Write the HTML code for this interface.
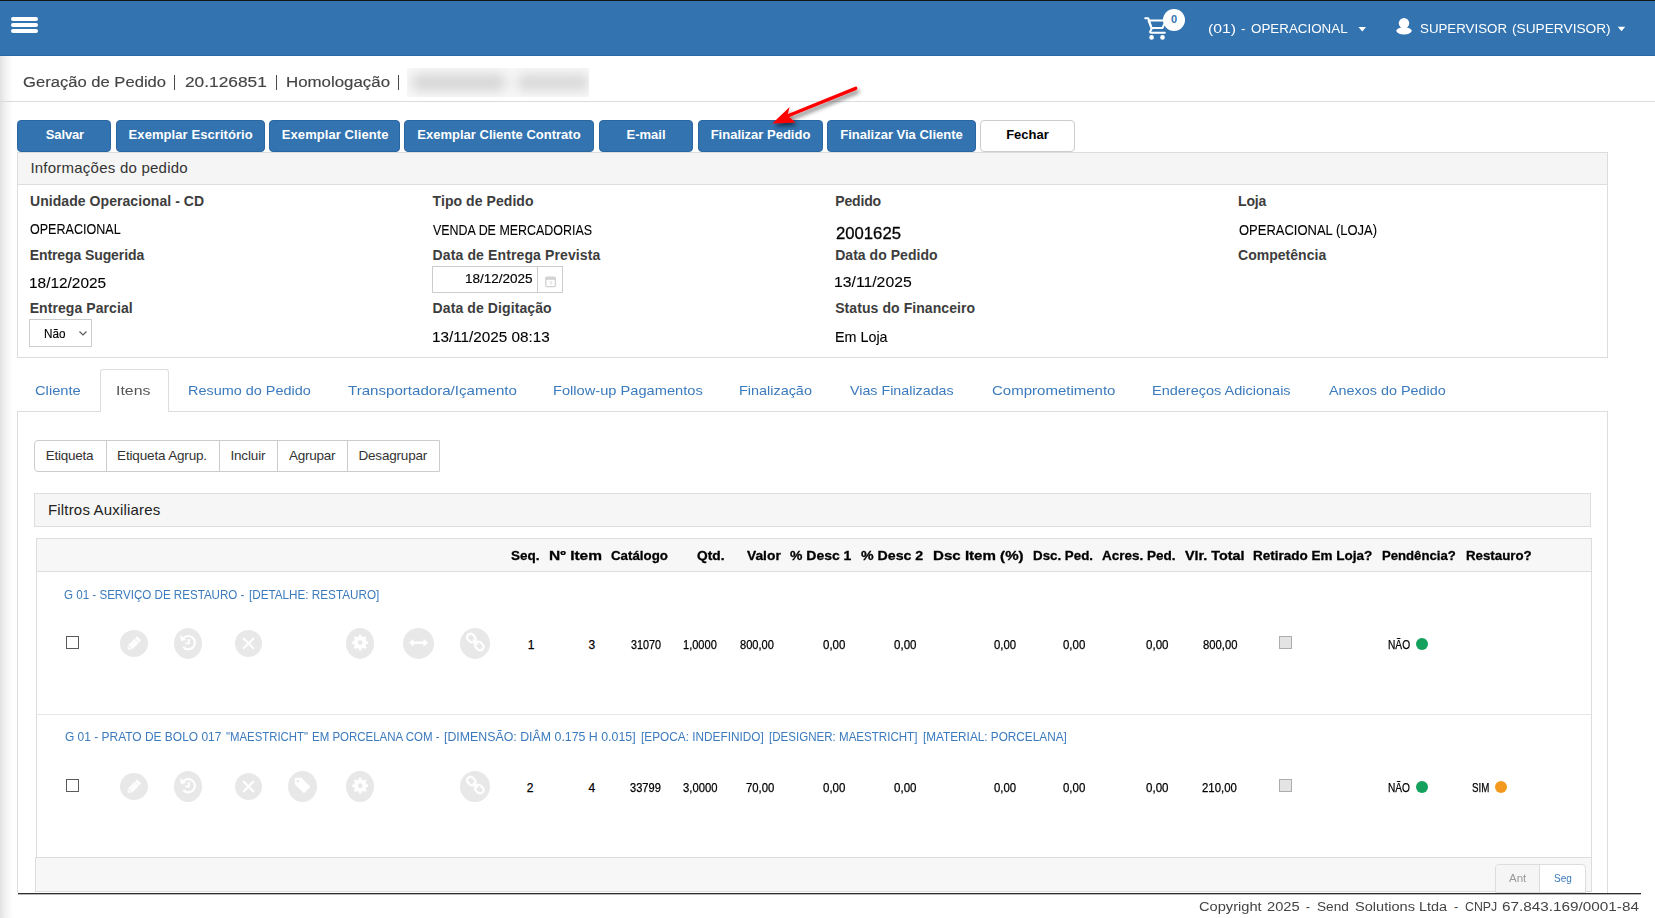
<!DOCTYPE html>
<html><head><meta charset="utf-8"><title>Geração de Pedido</title>
<style>
html,body{margin:0;padding:0;}
body{width:1655px;height:918px;overflow:hidden;position:relative;background:#fff;font-family:"Liberation Sans",sans-serif;}
.a{position:absolute;box-sizing:border-box;}
.t{position:absolute;white-space:nowrap;}
.btn{position:absolute;box-sizing:border-box;top:120px;height:32px;background:#3273b0;border:1px solid #2a66a0;border-radius:4px;}
.circ{position:absolute;background:#e8e8e8;border-radius:50%;}
.circ svg{position:absolute;left:0;top:0;}
</style></head><body>
<!-- left shadow -->
<div class="a" style="left:0;top:56px;width:13px;height:862px;background:linear-gradient(to right,#e2e2e2,#f3f3f3 45%,#fff)"></div>
<!-- navbar -->
<div class="a" style="left:0;top:0;width:1655px;height:56px;background:#3273b0;border-top:1px solid #151515;border-bottom:1px solid #2c69a6"></div>
<div class="a" style="left:11px;top:17px;width:27px;height:4px;background:#fff;border-radius:2px"></div>
<div class="a" style="left:11px;top:23px;width:27px;height:4px;background:#fff;border-radius:2px"></div>
<div class="a" style="left:11px;top:29px;width:27px;height:4px;background:#fff;border-radius:2px"></div>
<svg class="a" style="left:1140px;top:12px" width="30" height="30" viewBox="1140 12 30 30">
 <path d="M1145.2 18.2 H1148.2 L1151.8 28.6 L1150.2 31.4 Q1149.6 32.8 1151.2 32.8 H1164.8" fill="none" stroke="#fff" stroke-width="2" stroke-linejoin="round" stroke-linecap="round"/>
 <path d="M1148.6 20.6 H1166 L1162.4 28 H1151.4 Z" fill="none" stroke="#fff" stroke-width="2" stroke-linejoin="round"/>
 <circle cx="1151.6" cy="37.4" r="2.3" fill="#fff"/>
 <circle cx="1162.5" cy="37.4" r="2.3" fill="#fff"/>
</svg>
<div class="a" style="left:1163px;top:9px;width:22px;height:22px;border-radius:50%;background:#fff"></div>
<svg class="a" style="left:1358px;top:26px" width="9" height="7"><path d="M0.5 1 H8 L4.25 5.5 Z" fill="#fff"/></svg>
<svg class="a" style="left:1617px;top:26px" width="9" height="7"><path d="M0.8 0.8 H8.2 L4.5 5.2 Z" fill="#fff"/></svg>
<svg class="a" style="left:1395px;top:17px" width="18" height="19" viewBox="0 0 18 19">
 <circle cx="9" cy="6.2" r="5.2" fill="#fff"/>
 <path d="M1.1 13.6 Q3.2 10.6 7 10.6 H11 Q14.8 10.6 16.9 13.6 Q15.6 17.6 9 17.6 Q2.4 17.6 1.1 13.6 Z" fill="#fff"/>
</svg>
<!-- title -->
<div class="a" style="left:407px;top:68px;width:182px;height:29px;background:#f8f8f8;overflow:hidden">
  <div class="a" style="left:5px;top:6px;width:94px;height:17px;background:#d6d6d6;filter:blur(6px);border-radius:6px"></div>
  <div class="a" style="left:110px;top:6px;width:72px;height:17px;background:#d9d9d9;filter:blur(6px);border-radius:6px"></div>
</div>
<div class="a" style="left:0;top:101px;width:1655px;height:1px;background:#dcdcdc"></div>
<div class="a" style="left:174.1px;top:75px;width:1.1px;height:15px;background:#4a4a4a"></div>
<div class="a" style="left:276px;top:75px;width:1.1px;height:15px;background:#4a4a4a"></div>
<div class="a" style="left:398.3px;top:75px;width:1.1px;height:15px;background:#4a4a4a"></div>
<!-- buttons -->
<div class="btn" style="left:17px;width:94px"></div>
<div class="btn" style="left:116px;width:149px"></div>
<div class="btn" style="left:269px;width:131px"></div>
<div class="btn" style="left:404px;width:190px"></div>
<div class="btn" style="left:599px;width:94px"></div>
<div class="btn" style="left:698px;width:125px"></div>
<div class="btn" style="left:827px;width:149px"></div>
<div class="btn" style="left:980px;width:95px;background:#fff;border-color:#ccc"></div>
<!-- info panel -->
<div class="a" style="left:17px;top:152px;width:1591px;height:206px;border:1px solid #dddddd"></div>
<div class="a" style="left:18px;top:153px;width:1589px;height:32px;background:#f5f5f5;border-bottom:1px solid #dddddd"></div>
<!-- date input -->
<div class="a" style="left:432px;top:266px;width:131px;height:27px;border:1px solid #cccccc"></div>
<div class="a" style="left:537px;top:266px;width:1px;height:27px;background:#cccccc"></div>
<svg class="a" style="left:544px;top:275px" width="13" height="13" viewBox="0 0 13 13">
 <rect x="1.8" y="2.2" width="9.6" height="9.4" rx="1.2" fill="none" stroke="#d2d2d2" stroke-width="1.3"/>
 <rect x="1.8" y="2.2" width="9.6" height="2.6" fill="#d2d2d2"/>
 <path d="M5.2 7 H8 L6.6 10" fill="none" stroke="#dedede" stroke-width="1"/>
</svg>
<!-- select -->
<div class="a" style="left:29px;top:319px;width:63px;height:28px;border:1px solid #cccccc;background:#fff"></div>
<svg class="a" style="left:78px;top:329px" width="10" height="8"><path d="M1.5 2.5 L5 6 L8.5 2.5" fill="none" stroke="#555" stroke-width="1.1"/></svg>
<!-- tabs -->
<div class="a" style="left:17px;top:411px;width:1591px;height:1px;background:#dddddd"></div>
<div class="a" style="left:100px;top:369px;width:69px;height:43px;border:1px solid #dddddd;border-bottom:none;background:#fff;border-radius:3px 3px 0 0"></div>
<div class="a" style="left:17px;top:411px;width:1px;height:482px;background:#dddddd"></div>
<div class="a" style="left:1607px;top:411px;width:1px;height:482px;background:#dddddd"></div>
<!-- button group -->
<div class="a" style="left:34px;top:440px;width:406px;height:32px;border:1px solid #cccccc;border-radius:4px 0 0 4px"></div>
<div class="a" style="left:106px;top:440px;width:1px;height:32px;background:#cccccc"></div>
<div class="a" style="left:219px;top:440px;width:1px;height:32px;background:#cccccc"></div>
<div class="a" style="left:277px;top:440px;width:1px;height:32px;background:#cccccc"></div>
<div class="a" style="left:347px;top:440px;width:1px;height:32px;background:#cccccc"></div>
<!-- filtros -->
<div class="a" style="left:34px;top:493px;width:1557px;height:34px;background:#f6f6f6;border:1px solid #dddddd"></div>
<!-- table -->
<div class="a" style="left:36px;top:538px;width:1556px;height:320px;border:1px solid #dddddd;border-bottom:none"></div>
<div class="a" style="left:37px;top:539px;width:1554px;height:33px;background:#f7f7f7;border-bottom:1px solid #dddddd"></div>
<div class="a" style="left:37px;top:714px;width:1554px;height:1px;background:#e6e6e6"></div>
<!-- row checkboxes -->
<div class="a" style="left:66px;top:636px;width:13px;height:13px;border:1px solid #5a5a5a;background:#fff"></div>
<div class="a" style="left:66px;top:779px;width:13px;height:13px;border:1px solid #5a5a5a;background:#fff"></div>
<div class="a" style="left:1279px;top:636px;width:13px;height:13px;border:1px solid #adadad;background:#e4e4e4"></div>
<div class="a" style="left:1279px;top:779px;width:13px;height:13px;border:1px solid #adadad;background:#e4e4e4"></div>
<!-- dots -->
<div class="a" style="left:1415.5px;top:638px;width:12px;height:12px;border-radius:50%;background:#13a15d"></div>
<div class="a" style="left:1415.5px;top:781.3px;width:12px;height:12px;border-radius:50%;background:#13a15d"></div>
<div class="a" style="left:1494.5px;top:781.3px;width:12px;height:12px;border-radius:50%;background:#f39a1e"></div>
<svg class="a" style="left:0;top:0" width="1655" height="918" viewBox="0 0 1655 918">
<ellipse cx="134" cy="643.4" rx="14.0" ry="13.5" fill="#e8e8e8"/>
<g transform="translate(134,643.4) rotate(-45)"><rect x="-5.6" y="-2.9" width="9.4" height="5.8" fill="#fff"/><rect x="4.5" y="-2.9" width="2.6" height="5.8" rx="0.6" fill="#fff"/><path d="M-6.4 -2.9 L-8.6 0 L-6.4 2.9 Z" fill="#fff"/><line x1="-6" y1="-1.0" x2="3.2" y2="-1.0" stroke="#e8e8e8" stroke-width="0.5"/></g>
<ellipse cx="188" cy="643.4" rx="14.0" ry="15.5" fill="#e8e8e8"/>
<g transform="translate(188.4,642.6)" fill="none" stroke="#fff" stroke-width="2.1"><path d="M-5.8 -3.2 A6.6 6.6 0 1 1 -5.2 4.2"/><path d="M0.4 -3.6 V0.8 H-3" stroke-width="1.9"/></g><path d="M180.20000000000002 635.0 L180.8 641.0 L186.20000000000002 640.0 Z" fill="#fff"/>
<ellipse cx="248.5" cy="643.4" rx="13.5" ry="13.5" fill="#e8e8e8"/>
<g stroke="#fff" stroke-width="2.1" stroke-linecap="butt"><line x1="243.1" y1="638.0" x2="253.9" y2="648.8"/><line x1="253.9" y1="638.0" x2="243.1" y2="648.8"/></g>
<ellipse cx="360" cy="643.4" rx="14.0" ry="15.5" fill="#e8e8e8"/>
<path d="M366.06 641.29 L368.08 641.25 L368.08 643.95 L366.06 643.91 L365.27 645.81 L366.73 647.22 L364.82 649.13 L363.41 647.67 L361.51 648.46 L361.55 650.48 L358.85 650.48 L358.89 648.46 L356.99 647.67 L355.58 649.13 L353.67 647.22 L355.13 645.81 L354.34 643.91 L352.32 643.95 L352.32 641.25 L354.34 641.29 L355.13 639.39 L353.67 637.98 L355.58 636.07 L356.99 637.53 L358.89 636.74 L358.85 634.72 L361.55 634.72 L361.51 636.74 L363.41 637.53 L364.82 636.07 L366.73 637.98 L365.27 639.39 Z" fill="#fff"/><circle cx="360.2" cy="642.6" r="6.2" fill="#fff"/><circle cx="360.2" cy="642.6" r="2.4" fill="#e8e8e8"/>
<ellipse cx="418.5" cy="643.4" rx="15.5" ry="15.5" fill="#e8e8e8"/>
<rect x="412.5" y="641.4" width="12" height="2.6" fill="#fff"/><path d="M409.0 642.6999999999999 L413.5 638.6999999999999 L413.5 646.6999999999999 Z" fill="#fff"/><path d="M428.0 642.6999999999999 L423.5 638.6999999999999 L423.5 646.6999999999999 Z" fill="#fff"/>
<ellipse cx="475" cy="643.4" rx="15.0" ry="15.5" fill="#e8e8e8"/>
<g transform="translate(475.3,642.0) rotate(-45)" fill="none" stroke="#fff" stroke-width="2.2"><rect x="-3.4" y="-10.2" width="6.8" height="9.2" rx="3.2"/><rect x="-3.4" y="1.0" width="6.8" height="9.2" rx="3.2"/><line x1="0" y1="-3.6" x2="0" y2="3.6" stroke-width="1.6"/></g>
<ellipse cx="134" cy="786.5" rx="14.0" ry="13.5" fill="#e8e8e8"/>
<g transform="translate(134,786.5) rotate(-45)"><rect x="-5.6" y="-2.9" width="9.4" height="5.8" fill="#fff"/><rect x="4.5" y="-2.9" width="2.6" height="5.8" rx="0.6" fill="#fff"/><path d="M-6.4 -2.9 L-8.6 0 L-6.4 2.9 Z" fill="#fff"/><line x1="-6" y1="-1.0" x2="3.2" y2="-1.0" stroke="#e8e8e8" stroke-width="0.5"/></g>
<ellipse cx="188" cy="786.5" rx="14.0" ry="15.5" fill="#e8e8e8"/>
<g transform="translate(188.4,785.7)" fill="none" stroke="#fff" stroke-width="2.1"><path d="M-5.8 -3.2 A6.6 6.6 0 1 1 -5.2 4.2"/><path d="M0.4 -3.6 V0.8 H-3" stroke-width="1.9"/></g><path d="M180.20000000000002 778.1 L180.8 784.1 L186.20000000000002 783.1 Z" fill="#fff"/>
<ellipse cx="248.5" cy="786.5" rx="13.5" ry="13.5" fill="#e8e8e8"/>
<g stroke="#fff" stroke-width="2.1" stroke-linecap="butt"><line x1="243.1" y1="781.1" x2="253.9" y2="791.9"/><line x1="253.9" y1="781.1" x2="243.1" y2="791.9"/></g>
<ellipse cx="302.5" cy="786.5" rx="14.5" ry="15.5" fill="#e8e8e8"/>
<path d="M294.8 778.7 Q294.8 777.7 295.8 777.7 L301.40000000000003 777.7 L310.40000000000003 786.7 L304.0 793.3000000000001 L294.8 784.3000000000001 Z" fill="#fff"/><circle cx="297.8" cy="781.1" r="1.3" fill="#e8e8e8"/>
<ellipse cx="360" cy="786.5" rx="14.0" ry="15.5" fill="#e8e8e8"/>
<path d="M366.06 784.39 L368.08 784.35 L368.08 787.05 L366.06 787.01 L365.27 788.91 L366.73 790.32 L364.82 792.23 L363.41 790.77 L361.51 791.56 L361.55 793.58 L358.85 793.58 L358.89 791.56 L356.99 790.77 L355.58 792.23 L353.67 790.32 L355.13 788.91 L354.34 787.01 L352.32 787.05 L352.32 784.35 L354.34 784.39 L355.13 782.49 L353.67 781.08 L355.58 779.17 L356.99 780.63 L358.89 779.84 L358.85 777.82 L361.55 777.82 L361.51 779.84 L363.41 780.63 L364.82 779.17 L366.73 781.08 L365.27 782.49 Z" fill="#fff"/><circle cx="360.2" cy="785.7" r="6.2" fill="#fff"/><circle cx="360.2" cy="785.7" r="2.4" fill="#e8e8e8"/>
<ellipse cx="475" cy="786.5" rx="15.0" ry="15.5" fill="#e8e8e8"/>
<g transform="translate(475.3,785.1) rotate(-45)" fill="none" stroke="#fff" stroke-width="2.2"><rect x="-3.4" y="-10.2" width="6.8" height="9.2" rx="3.2"/><rect x="-3.4" y="1.0" width="6.8" height="9.2" rx="3.2"/><line x1="0" y1="-3.6" x2="0" y2="3.6" stroke-width="1.6"/></g>
</svg>
<!-- pager -->
<div class="a" style="left:35px;top:857px;width:1557px;height:35px;background:#f7f7f7;border:1px solid #dddddd"></div>
<div class="a" style="left:1495px;top:864px;width:91px;height:29px;border:1px solid #dddddd;border-radius:4px 4px 0 0;background:#fff;overflow:hidden">
  <div class="a" style="left:0;top:0;width:44px;height:29px;background:#f5f5f5;border-right:1px solid #dddddd"></div>
</div>
<!-- footer -->
<div class="a" style="left:18px;top:893px;width:1623px;height:1px;background:#2e2e2e"></div>
<div class="a" style="left:18px;top:894px;width:1623px;height:1px;background:#b8b8b8"></div>
<!-- red arrow -->
<svg class="a" style="left:740px;top:70px" width="140" height="80" viewBox="740 70 140 80">
 <defs><filter id="sh" x="-30%" y="-30%" width="160%" height="160%"><feGaussianBlur in="SourceAlpha" stdDeviation="2"/><feOffset dx="2" dy="3" result="b"/><feComponentTransfer><feFuncA type="linear" slope="0.55"/></feComponentTransfer><feMerge><feMergeNode/><feMergeNode in="SourceGraphic"/></feMerge></filter></defs>
 <g filter="url(#sh)">
  <line x1="855.7" y1="88.3" x2="785" y2="117" stroke="#ff0000" stroke-width="3.4" stroke-linecap="round"/>
  <path d="M772.3 123.5 L789.6 106.9 L787.5 115.5 L795.5 122.5 Z" fill="#ff0000"/>
 </g>
</svg>
<div class=t style="left:1207.50px;top:22.80px;font:400 12.5px/12.5px 'Liberation Sans',sans-serif;color:#fff;transform:scaleX(1.2598);transform-origin:0 0">(01)</div>
<div class=t style="left:1241.10px;top:22.80px;font:400 12.5px/12.5px 'Liberation Sans',sans-serif;color:#fff;letter-spacing:0.000px">-</div>
<div class=t style="left:1251.30px;top:22.80px;font:400 12.5px/12.5px 'Liberation Sans',sans-serif;color:#fff;transform:scaleX(1.0703);transform-origin:0 0">OPERACIONAL</div>
<div class=t style="left:1420.40px;top:22.90px;font:400 12.5px/12.5px 'Liberation Sans',sans-serif;color:#fff;transform:scaleX(1.0647);transform-origin:0 0">SUPERVISOR</div>
<div class=t style="left:1512.30px;top:22.90px;font:400 12.5px/12.5px 'Liberation Sans',sans-serif;color:#fff;transform:scaleX(1.0957);transform-origin:0 0">(SUPERVISOR)</div>
<div class=t style="left:1171.00px;top:14.00px;font:700 11px/11px 'Liberation Sans',sans-serif;color:#3273b0;letter-spacing:0.000px">0</div>
<div class=t style="left:22.90px;top:73.90px;font:400 15.5px/15.5px 'Liberation Sans',sans-serif;color:#444;transform:scaleX(1.0711);transform-origin:0 0;-webkit-text-stroke:0.15px #444">Geração de Pedido</div>
<div class=t style="left:184.60px;top:73.90px;font:400 15.5px/15.5px 'Liberation Sans',sans-serif;color:#444;transform:scaleX(1.1163);transform-origin:0 0;-webkit-text-stroke:0.15px #444">20.126851</div>
<div class=t style="left:285.51px;top:73.90px;font:400 15.5px/15.5px 'Liberation Sans',sans-serif;color:#444;transform:scaleX(1.0881);transform-origin:0 0;-webkit-text-stroke:0.15px #444">Homologação</div>
<div class=t style="left:45.80px;top:128.20px;font:700 13px/13px 'Liberation Sans',sans-serif;color:#fff;letter-spacing:-0.135px">Salvar</div>
<div class=t style="left:128.60px;top:128.20px;font:700 13px/13px 'Liberation Sans',sans-serif;color:#fff;letter-spacing:0.073px">Exemplar Escritório</div>
<div class=t style="left:281.80px;top:128.20px;font:700 13px/13px 'Liberation Sans',sans-serif;color:#fff;letter-spacing:0.076px">Exemplar Cliente</div>
<div class=t style="left:417.37px;top:128.20px;font:700 13px/13px 'Liberation Sans',sans-serif;color:#fff;letter-spacing:0.000px">Exemplar Cliente Contrato</div>
<div class=t style="left:626.49px;top:128.20px;font:700 13px/13px 'Liberation Sans',sans-serif;color:#fff;letter-spacing:0.000px">E-mail</div>
<div class=t style="left:710.66px;top:128.20px;font:700 13px/13px 'Liberation Sans',sans-serif;color:#fff;letter-spacing:0.000px">Finalizar Pedido</div>
<div class=t style="left:840.21px;top:128.20px;font:700 13px/13px 'Liberation Sans',sans-serif;color:#fff;letter-spacing:0.000px">Finalizar Via Cliente</div>
<div class=t style="left:1006.18px;top:128.20px;font:700 13px/13px 'Liberation Sans',sans-serif;color:#000;letter-spacing:0.000px">Fechar</div>
<div class=t style="left:30.40px;top:159.90px;font:400 15px/15px 'Liberation Sans',sans-serif;color:#333;letter-spacing:0.232px">Informações do pedido</div>
<div class=t style="left:30.00px;top:193.50px;font:700 14px/14px 'Liberation Sans',sans-serif;color:#3d3d3d;letter-spacing:0.061px">Unidade Operacional - CD</div>
<div class=t style="left:432.60px;top:193.50px;font:700 14px/14px 'Liberation Sans',sans-serif;color:#3d3d3d;letter-spacing:0.067px">Tipo de Pedido</div>
<div class=t style="left:835.20px;top:193.60px;font:700 14px/14px 'Liberation Sans',sans-serif;color:#3d3d3d;letter-spacing:-0.143px">Pedido</div>
<div class=t style="left:1238.00px;top:193.60px;font:700 14px/14px 'Liberation Sans',sans-serif;color:#3d3d3d;letter-spacing:-0.131px">Loja</div>
<div class=t style="left:29.70px;top:247.80px;font:700 14px/14px 'Liberation Sans',sans-serif;color:#3d3d3d;letter-spacing:-0.095px">Entrega Sugerida</div>
<div class=t style="left:432.60px;top:248.00px;font:700 14px/14px 'Liberation Sans',sans-serif;color:#3d3d3d;letter-spacing:0.119px">Data de Entrega Prevista</div>
<div class=t style="left:835.20px;top:248.00px;font:700 14px/14px 'Liberation Sans',sans-serif;color:#3d3d3d;letter-spacing:0.035px">Data do Pedido</div>
<div class=t style="left:1238.00px;top:247.80px;font:700 14px/14px 'Liberation Sans',sans-serif;color:#3d3d3d;letter-spacing:0.028px">Competência</div>
<div class=t style="left:29.70px;top:300.80px;font:700 14px/14px 'Liberation Sans',sans-serif;color:#3d3d3d;letter-spacing:0.075px">Entrega Parcial</div>
<div class=t style="left:432.60px;top:300.80px;font:700 14px/14px 'Liberation Sans',sans-serif;color:#3d3d3d;letter-spacing:0.099px">Data de Digitação</div>
<div class=t style="left:835.20px;top:300.80px;font:700 14px/14px 'Liberation Sans',sans-serif;color:#3d3d3d;letter-spacing:0.078px">Status do Financeiro</div>
<div class=t style="left:30.20px;top:222.30px;font:400 14px/14px 'Liberation Sans',sans-serif;color:#000;transform:scaleX(0.8959);transform-origin:0 0;-webkit-text-stroke:0.10px #000">OPERACIONAL</div>
<div class=t style="left:432.80px;top:222.60px;font:400 14px/14px 'Liberation Sans',sans-serif;color:#000;transform:scaleX(0.8887);transform-origin:0 0;-webkit-text-stroke:0.10px #000">VENDA DE MERCADORIAS</div>
<div class=t style="left:835.50px;top:224.70px;font:400 17px/17px 'Liberation Sans',sans-serif;color:#000;transform:scaleX(0.9813);transform-origin:0 0;-webkit-text-stroke:0.30px #000">2001625</div>
<div class=t style="left:1238.60px;top:222.80px;font:400 14px/14px 'Liberation Sans',sans-serif;color:#000;transform:scaleX(0.9274);transform-origin:0 0;-webkit-text-stroke:0.10px #000">OPERACIONAL (LOJA)</div>
<div class=t style="left:29.44px;top:275.70px;font:400 14.5px/14.5px 'Liberation Sans',sans-serif;color:#000;transform:scaleX(1.0628);transform-origin:0 0;-webkit-text-stroke:0.10px #000">18/12/2025</div>
<div class=t style="left:834.41px;top:275.40px;font:400 14.5px/14.5px 'Liberation Sans',sans-serif;color:#000;transform:scaleX(1.0862);transform-origin:0 0;-webkit-text-stroke:0.10px #000">13/11/2025</div>
<div class=t style="left:431.95px;top:329.50px;font:400 14.5px/14.5px 'Liberation Sans',sans-serif;color:#000;transform:scaleX(1.0529);transform-origin:0 0;-webkit-text-stroke:0.10px #000">13/11/2025 08:13</div>
<div class=t style="left:834.51px;top:329.50px;font:400 14.5px/14.5px 'Liberation Sans',sans-serif;color:#000;transform:scaleX(0.9882);transform-origin:0 0;-webkit-text-stroke:0.10px #000">Em Loja</div>
<div class=t style="left:465.00px;top:273.10px;font:400 12px/12px 'Liberation Sans',sans-serif;color:#000;transform:scaleX(1.1261);transform-origin:0 0;-webkit-text-stroke:0.15px #000">18/12/2025</div>
<div class=t style="left:43.60px;top:327.60px;font:400 12px/12px 'Liberation Sans',sans-serif;color:#000;transform:scaleX(0.9758);transform-origin:0 0;-webkit-text-stroke:0.15px #000">Não</div>
<div class=t style="left:34.90px;top:384.30px;font:400 13.5px/13.5px 'Liberation Sans',sans-serif;color:#3a7abd;transform:scaleX(1.0888);transform-origin:0 0">Cliente</div>
<div class=t style="left:116.33px;top:384.30px;font:400 13.5px/13.5px 'Liberation Sans',sans-serif;color:#555;transform:scaleX(1.1747);transform-origin:0 0">Itens</div>
<div class=t style="left:187.93px;top:384.30px;font:400 13.5px/13.5px 'Liberation Sans',sans-serif;color:#3a7abd;transform:scaleX(1.0696);transform-origin:0 0">Resumo do Pedido</div>
<div class=t style="left:347.50px;top:384.30px;font:400 13.5px/13.5px 'Liberation Sans',sans-serif;color:#3a7abd;transform:scaleX(1.1178);transform-origin:0 0">Transportadora/Içamento</div>
<div class=t style="left:552.52px;top:384.30px;font:400 13.5px/13.5px 'Liberation Sans',sans-serif;color:#3a7abd;transform:scaleX(1.0843);transform-origin:0 0">Follow-up Pagamentos</div>
<div class=t style="left:738.93px;top:384.30px;font:400 13.5px/13.5px 'Liberation Sans',sans-serif;color:#3a7abd;transform:scaleX(1.0677);transform-origin:0 0">Finalização</div>
<div class=t style="left:849.80px;top:384.30px;font:400 13.5px/13.5px 'Liberation Sans',sans-serif;color:#3a7abd;transform:scaleX(1.0569);transform-origin:0 0">Vias Finalizadas</div>
<div class=t style="left:991.80px;top:384.30px;font:400 13.5px/13.5px 'Liberation Sans',sans-serif;color:#3a7abd;transform:scaleX(1.1119);transform-origin:0 0">Comprometimento</div>
<div class=t style="left:1151.73px;top:384.30px;font:400 13.5px/13.5px 'Liberation Sans',sans-serif;color:#3a7abd;transform:scaleX(1.0738);transform-origin:0 0">Endereços Adicionais</div>
<div class=t style="left:1328.70px;top:384.30px;font:400 13.5px/13.5px 'Liberation Sans',sans-serif;color:#3a7abd;transform:scaleX(1.0644);transform-origin:0 0">Anexos do Pedido</div>
<div class=t style="left:45.80px;top:448.80px;font:400 13.5px/13.5px 'Liberation Sans',sans-serif;color:#333;letter-spacing:-0.261px">Etiqueta</div>
<div class=t style="left:117.10px;top:448.80px;font:400 13.5px/13.5px 'Liberation Sans',sans-serif;color:#333;letter-spacing:-0.165px">Etiqueta Agrup.</div>
<div class=t style="left:230.40px;top:448.80px;font:400 13.5px/13.5px 'Liberation Sans',sans-serif;color:#333;letter-spacing:-0.153px">Incluir</div>
<div class=t style="left:289.10px;top:448.80px;font:400 13.5px/13.5px 'Liberation Sans',sans-serif;color:#333;letter-spacing:-0.289px">Agrupar</div>
<div class=t style="left:358.50px;top:448.80px;font:400 13.5px/13.5px 'Liberation Sans',sans-serif;color:#333;letter-spacing:-0.194px">Desagrupar</div>
<div class=t style="left:48.00px;top:502.00px;font:400 15px/15px 'Liberation Sans',sans-serif;color:#222;letter-spacing:0.175px">Filtros Auxiliares</div>
<div class=t style="left:511.30px;top:549.20px;font:700 13px/13px 'Liberation Sans',sans-serif;color:#000;transform:scaleX(1.0394);transform-origin:0 0;-webkit-text-stroke:0.30px #000">Seq.</div>
<div class=t style="left:548.90px;top:549.20px;font:700 13px/13px 'Liberation Sans',sans-serif;color:#000;transform:scaleX(1.1908);transform-origin:0 0;-webkit-text-stroke:0.30px #000">Nº Item</div>
<div class=t style="left:610.50px;top:549.20px;font:700 13px/13px 'Liberation Sans',sans-serif;color:#000;transform:scaleX(1.0239);transform-origin:0 0;-webkit-text-stroke:0.30px #000">Catálogo</div>
<div class=t style="left:697.30px;top:549.20px;font:700 13px/13px 'Liberation Sans',sans-serif;color:#000;transform:scaleX(1.0559);transform-origin:0 0;-webkit-text-stroke:0.30px #000">Qtd.</div>
<div class=t style="left:746.90px;top:549.20px;font:700 13px/13px 'Liberation Sans',sans-serif;color:#000;transform:scaleX(1.0619);transform-origin:0 0;-webkit-text-stroke:0.30px #000">Valor</div>
<div class=t style="left:789.80px;top:549.20px;font:700 13px/13px 'Liberation Sans',sans-serif;color:#000;transform:scaleX(1.0746);transform-origin:0 0;-webkit-text-stroke:0.30px #000">% Desc 1</div>
<div class=t style="left:860.90px;top:549.20px;font:700 13px/13px 'Liberation Sans',sans-serif;color:#000;transform:scaleX(1.0904);transform-origin:0 0;-webkit-text-stroke:0.30px #000">% Desc 2</div>
<div class=t style="left:932.70px;top:549.20px;font:700 13px/13px 'Liberation Sans',sans-serif;color:#000;transform:scaleX(1.1610);transform-origin:0 0;-webkit-text-stroke:0.30px #000">Dsc Item (%)</div>
<div class=t style="left:1032.70px;top:549.20px;font:700 13px/13px 'Liberation Sans',sans-serif;color:#000;transform:scaleX(1.0257);transform-origin:0 0;-webkit-text-stroke:0.30px #000">Dsc. Ped.</div>
<div class=t style="left:1101.90px;top:549.20px;font:700 13px/13px 'Liberation Sans',sans-serif;color:#000;transform:scaleX(1.0384);transform-origin:0 0;-webkit-text-stroke:0.30px #000">Acres. Ped.</div>
<div class=t style="left:1184.60px;top:549.20px;font:700 13px/13px 'Liberation Sans',sans-serif;color:#000;transform:scaleX(1.1046);transform-origin:0 0;-webkit-text-stroke:0.30px #000">Vlr. Total</div>
<div class=t style="left:1252.80px;top:549.20px;font:700 13px/13px 'Liberation Sans',sans-serif;color:#000;transform:scaleX(1.0382);transform-origin:0 0;-webkit-text-stroke:0.30px #000">Retirado Em Loja?</div>
<div class=t style="left:1382.30px;top:549.20px;font:700 13px/13px 'Liberation Sans',sans-serif;color:#000;transform:scaleX(1.0106);transform-origin:0 0;-webkit-text-stroke:0.30px #000">Pendência?</div>
<div class=t style="left:1466.30px;top:549.20px;font:700 13px/13px 'Liberation Sans',sans-serif;color:#000;transform:scaleX(1.0210);transform-origin:0 0;-webkit-text-stroke:0.30px #000">Restauro?</div>
<div class=t style="left:64.40px;top:587.50px;font:400 13.5px/13.5px 'Liberation Sans',sans-serif;color:#3a7abd;transform:scaleX(0.8580);transform-origin:0 0">G 01 - SERVIÇO DE RESTAURO -</div>
<div class=t style="left:249.40px;top:587.50px;font:400 13.5px/13.5px 'Liberation Sans',sans-serif;color:#3a7abd;transform:scaleX(0.8668);transform-origin:0 0">[DETALHE: RESTAURO]</div>
<div class=t style="left:64.80px;top:730.30px;font:400 13.5px/13.5px 'Liberation Sans',sans-serif;color:#3a7abd;transform:scaleX(0.8855);transform-origin:0 0">G 01 - PRATO DE BOLO 017</div>
<div class=t style="left:225.60px;top:730.30px;font:400 13.5px/13.5px 'Liberation Sans',sans-serif;color:#3a7abd;transform:scaleX(0.8417);transform-origin:0 0">"MAESTRICHT"</div>
<div class=t style="left:311.75px;top:730.30px;font:400 13.5px/13.5px 'Liberation Sans',sans-serif;color:#3a7abd;transform:scaleX(0.8501);transform-origin:0 0">EM PORCELANA COM -</div>
<div class=t style="left:444.40px;top:730.30px;font:400 13.5px/13.5px 'Liberation Sans',sans-serif;color:#3a7abd;transform:scaleX(0.9152);transform-origin:0 0">[DIMENSÃO: DIÂM 0.175 H 0.015]</div>
<div class=t style="left:641.30px;top:730.30px;font:400 13.5px/13.5px 'Liberation Sans',sans-serif;color:#3a7abd;transform:scaleX(0.8752);transform-origin:0 0">[EPOCA: INDEFINIDO]</div>
<div class=t style="left:769.30px;top:730.30px;font:400 13.5px/13.5px 'Liberation Sans',sans-serif;color:#3a7abd;transform:scaleX(0.8562);transform-origin:0 0">[DESIGNER: MAESTRICHT]</div>
<div class=t style="left:923.40px;top:730.30px;font:400 13.5px/13.5px 'Liberation Sans',sans-serif;color:#3a7abd;transform:scaleX(0.8724);transform-origin:0 0">[MATERIAL: PORCELANA]</div>
<div class=t style="left:527.70px;top:638.60px;font:400 12px/12px 'Liberation Sans',sans-serif;color:#000;letter-spacing:0.000px;-webkit-text-stroke:0.25px #000">1</div>
<div class=t style="left:588.60px;top:638.60px;font:400 12px/12px 'Liberation Sans',sans-serif;color:#000;letter-spacing:0.000px;-webkit-text-stroke:0.25px #000">3</div>
<div class=t style="left:630.60px;top:638.60px;font:400 12px/12px 'Liberation Sans',sans-serif;color:#000;transform:scaleX(0.8992);transform-origin:0 0;-webkit-text-stroke:0.25px #000">31070</div>
<div class=t style="left:683.40px;top:638.60px;font:400 12px/12px 'Liberation Sans',sans-serif;color:#000;transform:scaleX(0.9209);transform-origin:0 0;-webkit-text-stroke:0.25px #000">1,0000</div>
<div class=t style="left:739.70px;top:638.60px;font:400 12px/12px 'Liberation Sans',sans-serif;color:#000;transform:scaleX(0.9236);transform-origin:0 0;-webkit-text-stroke:0.25px #000">800,00</div>
<div class=t style="left:822.50px;top:638.60px;font:400 12px/12px 'Liberation Sans',sans-serif;color:#000;transform:scaleX(0.9585);transform-origin:0 0;-webkit-text-stroke:0.25px #000">0,00</div>
<div class=t style="left:893.60px;top:638.60px;font:400 12px/12px 'Liberation Sans',sans-serif;color:#000;transform:scaleX(0.9628);transform-origin:0 0;-webkit-text-stroke:0.25px #000">0,00</div>
<div class=t style="left:994.20px;top:638.60px;font:400 12px/12px 'Liberation Sans',sans-serif;color:#000;transform:scaleX(0.9459);transform-origin:0 0;-webkit-text-stroke:0.25px #000">0,00</div>
<div class=t style="left:1063.40px;top:638.60px;font:400 12px/12px 'Liberation Sans',sans-serif;color:#000;transform:scaleX(0.9543);transform-origin:0 0;-webkit-text-stroke:0.25px #000">0,00</div>
<div class=t style="left:1145.60px;top:638.60px;font:400 12px/12px 'Liberation Sans',sans-serif;color:#000;transform:scaleX(0.9628);transform-origin:0 0;-webkit-text-stroke:0.25px #000">0,00</div>
<div class=t style="left:1202.80px;top:638.60px;font:400 12px/12px 'Liberation Sans',sans-serif;color:#000;transform:scaleX(0.9371);transform-origin:0 0;-webkit-text-stroke:0.25px #000">800,00</div>
<div class=t style="left:1388.40px;top:638.60px;font:400 12px/12px 'Liberation Sans',sans-serif;color:#000;transform:scaleX(0.8492);transform-origin:0 0;-webkit-text-stroke:0.25px #000">NÃO</div>
<div class=t style="left:526.70px;top:782.20px;font:400 12px/12px 'Liberation Sans',sans-serif;color:#000;letter-spacing:0.000px;-webkit-text-stroke:0.25px #000">2</div>
<div class=t style="left:588.50px;top:782.20px;font:400 12px/12px 'Liberation Sans',sans-serif;color:#000;letter-spacing:0.000px;-webkit-text-stroke:0.25px #000">4</div>
<div class=t style="left:630.20px;top:782.20px;font:400 12px/12px 'Liberation Sans',sans-serif;color:#000;transform:scaleX(0.9230);transform-origin:0 0;-webkit-text-stroke:0.25px #000">33799</div>
<div class=t style="left:683.10px;top:782.20px;font:400 12px/12px 'Liberation Sans',sans-serif;color:#000;transform:scaleX(0.9371);transform-origin:0 0;-webkit-text-stroke:0.25px #000">3,0000</div>
<div class=t style="left:745.90px;top:782.20px;font:400 12px/12px 'Liberation Sans',sans-serif;color:#000;transform:scaleX(0.9455);transform-origin:0 0;-webkit-text-stroke:0.25px #000">70,00</div>
<div class=t style="left:822.50px;top:782.20px;font:400 12px/12px 'Liberation Sans',sans-serif;color:#000;transform:scaleX(0.9585);transform-origin:0 0;-webkit-text-stroke:0.25px #000">0,00</div>
<div class=t style="left:893.60px;top:782.20px;font:400 12px/12px 'Liberation Sans',sans-serif;color:#000;transform:scaleX(0.9628);transform-origin:0 0;-webkit-text-stroke:0.25px #000">0,00</div>
<div class=t style="left:994.20px;top:782.20px;font:400 12px/12px 'Liberation Sans',sans-serif;color:#000;transform:scaleX(0.9459);transform-origin:0 0;-webkit-text-stroke:0.25px #000">0,00</div>
<div class=t style="left:1063.40px;top:782.20px;font:400 12px/12px 'Liberation Sans',sans-serif;color:#000;transform:scaleX(0.9543);transform-origin:0 0;-webkit-text-stroke:0.25px #000">0,00</div>
<div class=t style="left:1145.60px;top:782.20px;font:400 12px/12px 'Liberation Sans',sans-serif;color:#000;transform:scaleX(0.9628);transform-origin:0 0;-webkit-text-stroke:0.25px #000">0,00</div>
<div class=t style="left:1202.30px;top:782.20px;font:400 12px/12px 'Liberation Sans',sans-serif;color:#000;transform:scaleX(0.9479);transform-origin:0 0;-webkit-text-stroke:0.25px #000">210,00</div>
<div class=t style="left:1388.30px;top:782.20px;font:400 12px/12px 'Liberation Sans',sans-serif;color:#000;transform:scaleX(0.8453);transform-origin:0 0;-webkit-text-stroke:0.25px #000">NÃO</div>
<div class=t style="left:1472.00px;top:782.20px;font:400 12px/12px 'Liberation Sans',sans-serif;color:#000;transform:scaleX(0.8108);transform-origin:0 0;-webkit-text-stroke:0.25px #000">SIM</div>
<div class=t style="left:1509.00px;top:872.50px;font:400 11px/11px 'Liberation Sans',sans-serif;color:#999;transform:scaleX(1.0453);transform-origin:0 0">Ant</div>
<div class=t style="left:1553.70px;top:873.00px;font:400 11px/11px 'Liberation Sans',sans-serif;color:#3a7abd;transform:scaleX(0.9150);transform-origin:0 0">Seg</div>
<div class=t style="left:1199.00px;top:901.40px;font:400 12.5px/12.5px 'Liberation Sans',sans-serif;color:#444;transform:scaleX(1.1717);transform-origin:0 0">Copyright</div>
<div class=t style="left:1267.10px;top:901.40px;font:400 12.5px/12.5px 'Liberation Sans',sans-serif;color:#444;transform:scaleX(1.1739);transform-origin:0 0">2025</div>
<div class=t style="left:1305.80px;top:901.40px;font:400 12.5px/12.5px 'Liberation Sans',sans-serif;color:#444;letter-spacing:0.000px">-</div>
<div class=t style="left:1316.50px;top:901.40px;font:400 12.5px/12.5px 'Liberation Sans',sans-serif;color:#444;transform:scaleX(1.0909);transform-origin:0 0">Send</div>
<div class=t style="left:1354.70px;top:901.40px;font:400 12.5px/12.5px 'Liberation Sans',sans-serif;color:#444;transform:scaleX(1.1667);transform-origin:0 0">Solutions</div>
<div class=t style="left:1419.45px;top:901.40px;font:400 12.5px/12.5px 'Liberation Sans',sans-serif;color:#444;transform:scaleX(1.1550);transform-origin:0 0">Ltda</div>
<div class=t style="left:1454.00px;top:901.40px;font:400 12.5px/12.5px 'Liberation Sans',sans-serif;color:#444;letter-spacing:0.000px">-</div>
<div class=t style="left:1464.70px;top:901.40px;font:400 12.5px/12.5px 'Liberation Sans',sans-serif;color:#444;transform:scaleX(0.9848);transform-origin:0 0">CNPJ</div>
<div class=t style="left:1502.30px;top:901.40px;font:400 12.5px/12.5px 'Liberation Sans',sans-serif;color:#444;transform:scaleX(1.2237);transform-origin:0 0">67.843.169/0001-84</div>
</body></html>
